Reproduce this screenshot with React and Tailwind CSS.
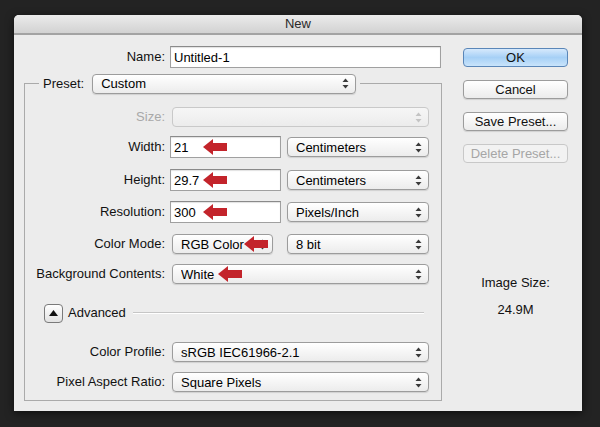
import React from "react";

const font = { fontFamily: '"Liberation Sans", Arial, sans-serif' };

function UpDown({ disabled }) {
  const c = disabled ? "#c4c4c4" : "#3a3a3a";
  return (
    <svg width="7" height="11" viewBox="0 0 7 11" className="shrink-0">
      <polygon points="0.5,4 3.5,0.5 6.5,4" fill={c} />
      <polygon points="0.5,7 3.5,10.5 6.5,7" fill={c} />
    </svg>
  );
}

function RedArrow({ className }) {
  return (
    <svg
      width="24"
      height="16"
      viewBox="0 0 24 16"
      className={`absolute top-1/2 -translate-y-1/2 ${className}`}
    >
      <polygon points="0,8 10,0 10,4 24,4 24,12 10,12 10,16" fill="#c3242b" />
    </svg>
  );
}

function Select({ children, className = "", disabled, arrow }) {
  return (
    <div
      className={`relative flex items-center h-[20px] rounded-[4px] border ${
        disabled
          ? "border-[#c9c9c9] bg-linear-to-b from-[#f6f6f6] to-[#ececec]"
          : "border-[#9c9c9c] bg-linear-to-b from-white to-[#ececec] shadow-[0_1px_1px_rgba(0,0,0,0.12)]"
      } pl-[8px] pr-[6px] ${className}`}
    >
      <span className="flex-1 truncate leading-none">{children}</span>
      <UpDown disabled={disabled} />
      {arrow}
    </div>
  );
}

function TextField({ value, className = "", arrow }) {
  return (
    <div
      className={`relative flex items-center h-[22px] bg-white border border-[#a0a0a0] border-t-[#8a8a8a] shadow-[inset_0_1px_1px_rgba(0,0,0,0.12)] pl-[3px] ${className}`}
    >
      <span className="leading-none">{value}</span>
      {arrow && <RedArrow className="left-[32px]" />}
    </div>
  );
}

function Row({ label, children, className = "", muted }) {
  return (
    <div className={`flex items-center h-[22px] ${className}`}>
      <div
        className={`w-[140px] text-right ${
          muted ? "text-[#a8a8a8]" : "text-[#111]"
        }`}
      >
        {label}
      </div>
      <div className="flex items-center ml-[5px] flex-1">{children}</div>
    </div>
  );
}

function Button({ children, primary, disabled }) {
  return (
    <div
      className={`flex items-center justify-center h-[19px] w-[105px] rounded-[4px] border ${
        primary
          ? "border-[#5a86b8] bg-linear-to-b from-[#d6e9fc] via-[#a6d0f6] to-[#c9e4fb] text-[#111]"
          : disabled
          ? "border-[#c8c8c8] bg-[#f2f2f2] text-[#a6a6a6]"
          : "border-[#9c9c9c] bg-linear-to-b from-white to-[#ececec] text-[#111] shadow-[0_1px_1px_rgba(0,0,0,0.12)]"
      }`}
    >
      {children}
    </div>
  );
}

export default function App() {
  return (
    <div
      className="w-[600px] h-[427px] bg-[#232323] pt-[15px] pl-[14px] overflow-hidden text-[13px]"
      style={font}
    >
      <div className="w-[568px] h-[396px] bg-[#ececec] rounded-t-[5px] shadow-[0_2px_8px_rgba(0,0,0,0.6)] flex flex-col">
        {/* Title bar */}
        <div className="h-[20px] rounded-t-[5px] bg-linear-to-b from-[#ebebeb] to-[#d2d2d2] border-b-2 border-[#a3a3a3] flex items-center justify-center text-[#2a2a2a]">
          New
        </div>

        <div className="flex">
          {/* Left side */}
          <div className="w-[427px] pt-[11px]">
            <div className="flex items-center h-[22px]">
              <div className="w-[151px] text-right text-[#111]">Name:</div>
              <TextField value="Untitled-1" className="ml-[5px] w-[271px]" />
            </div>

            <fieldset className="ml-[10px] mt-[6px] w-[418px] h-[327px] border border-[#aaaaaa]">
              <legend className="ml-[14px] px-[4px]">
                <div className="flex items-center h-[19px]">
                  <span className="text-[#111]">Preset:</span>
                  <Select className="ml-[8px] w-[264px] h-[19px]">Custom</Select>
                </div>
              </legend>

              <Row label="Size:" muted className="mt-[13px]">
                <Select disabled className="ml-[2px] w-[257px]">
                  {"\u00a0"}
                </Select>
              </Row>

              <Row label="Width:" className="mt-[8px]">
                <TextField value="21" className="w-[111px]" arrow />
                <Select className="ml-[6px] w-[142px]">Centimeters</Select>
              </Row>

              <Row label="Height:" className="mt-[11px]">
                <TextField value="29.7" className="w-[111px]" arrow />
                <Select className="ml-[6px] w-[142px]">Centimeters</Select>
              </Row>

              <Row label="Resolution:" className="mt-[10px]">
                <TextField value="300" className="w-[111px]" arrow />
                <Select className="ml-[6px] w-[142px]">Pixels/Inch</Select>
              </Row>

              <Row label="Color Mode:" className="mt-[10px]">
                <Select
                  className="ml-[2px] w-[101px]"
                  arrow={<RedArrow className="left-[71px]" />}
                >
                  RGB Color
                </Select>
                <Select className="ml-[14px] w-[142px]">8 bit</Select>
              </Row>

              <Row label="Background Contents:" className="mt-[8px]">
                <Select
                  className="ml-[2px] w-[257px]"
                  arrow={<RedArrow className="left-[45px]" />}
                >
                  White
                </Select>
              </Row>

              <div className="flex items-center h-[22px] mt-[17px] pl-[19px] pr-[17px]">
                <div className="w-[19px] h-[19px] rounded-[4px] border border-[#7a7a7a] bg-linear-to-b from-white to-[#e2e2e2] flex items-center justify-center">
                  <svg width="9" height="6" viewBox="0 0 9 6">
                    <polygon points="0,6 4.5,0 9,6" fill="#111" />
                  </svg>
                </div>
                <span className="ml-[5px] text-[#111]">Advanced</span>
                <div className="flex-1 ml-[7px] h-[2px] border-t border-[#c6c6c6] border-b border-b-white" />
              </div>

              <Row label="Color Profile:" className="mt-[17px]">
                <Select className="ml-[2px] w-[257px]">sRGB IEC61966-2.1</Select>
              </Row>

              <Row label="Pixel Aspect Ratio:" className="mt-[8px]">
                <Select className="ml-[2px] w-[257px]">Square Pixels</Select>
              </Row>
            </fieldset>
          </div>

          {/* Right side */}
          <div className="ml-[22px] w-[105px] pt-[13px] flex flex-col">
            <div className="flex flex-col gap-[13px]">
              <Button primary>OK</Button>
              <Button>Cancel</Button>
              <Button>Save Preset...</Button>
              <Button disabled>Delete Preset...</Button>
            </div>
            <div className="mt-[112px] flex flex-col items-center text-[#111]">
              <span className="leading-[16px]">Image Size:</span>
              <span className="leading-[16px] mt-[11px]">24.9M</span>
            </div>
          </div>
        </div>
      </div>
    </div>
  );
}
